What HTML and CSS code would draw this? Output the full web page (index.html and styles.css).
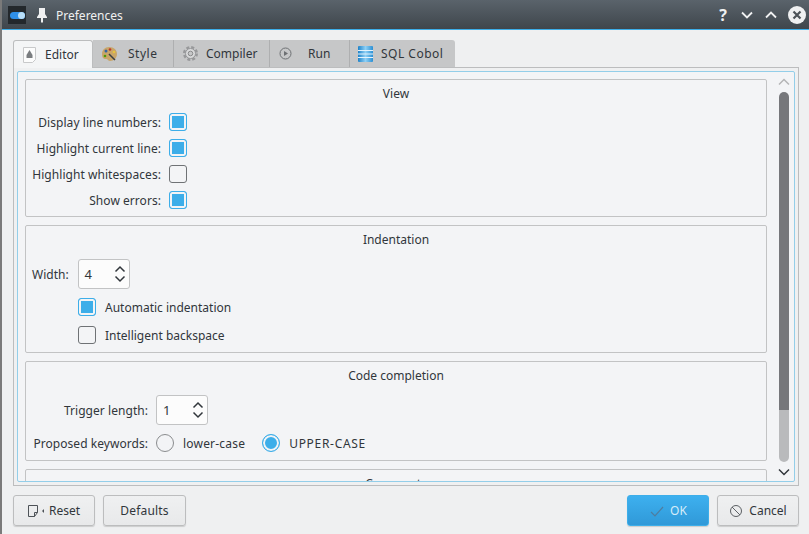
FILE: index.html
```html
<!DOCTYPE html>
<html lang="en">
<head>
    <meta charset="UTF-8">
    <title>Preferences</title>
    <link rel="stylesheet" href="styles.css">
</head>
<body>
<div class="window">
    <div class="titlebar">
        <div class="app-icon"><span class="app-pill"><span class="app-knob"></span></span></div>
        <svg class="pin" width="16" height="16" viewBox="0 0 16 16"><path d="M5 1h6v6l2 3v1H9v4l-1 1-1-1v-4H3v-1l2-3z" fill="#eff0f1"/></svg>
        <span class="title">Preferences</span>
        <div class="title-buttons">
            <span class="help">?</span>
            <svg width="14" height="14" viewBox="0 0 14 14"><path d="M2 4.500l5 5 5-5" fill="none" stroke="#eff0f1" stroke-width="1.800"/></svg>
            <svg width="14" height="14" viewBox="0 0 14 14"><path d="M2 9.500l5-5 5 5" fill="none" stroke="#eff0f1" stroke-width="1.800"/></svg>
            <svg width="18" height="18" viewBox="0 0 18 18"><circle cx="9" cy="9" r="9" fill="#eff0f1"/><path d="M5.500 5.500l7 7M12.500 5.500l-7 7" stroke="#4d5358" stroke-width="2.200"/></svg>
        </div>
    </div>

    <div class="content">
        <div class="tabs">
            <div class="tab tab-active">
                <svg width="16" height="18" viewBox="0 0 16 18"><path d="M1.500 1.500h12v12l-3 3h-9z" fill="#fcfcfc" stroke="#c8c9ca"/><path d="M7.500 4l3 5v3h-6V9z" fill="#7a7d80"/></svg>
                <span>Editor</span>
            </div>
            <div class="tab tab-style">
                <svg width="17" height="16" viewBox="0 0 17 16"><path d="M8 1c5 0 8 3 8 7s-3 7-7 7c-2 0-2-2-4-2-3 0-4-2-4-5 0-4 3-7 7-7z" fill="#c9a568"/><circle cx="5" cy="5" r="1.500" fill="#3465a4"/><circle cx="9" cy="3.500" r="1.300" fill="#c0392b"/><circle cx="13" cy="6" r="1.300" fill="#e8c33c"/><circle cx="4" cy="10" r="1.300" fill="#4e9a06"/><path d="M8 8l6 6" stroke="#3b3f42" stroke-width="1.500"/></svg>
                <span class="wide-text">Style</span>
            </div>
            <div class="tab tab-compiler">
                <svg width="17" height="17" viewBox="0 0 17 17"><circle cx="8.500" cy="8.500" r="6" fill="none" stroke="#97989a" stroke-width="3" stroke-dasharray="2.800 1.910"/><circle cx="8.500" cy="8.500" r="5" fill="#d9dadb" stroke="#97989a"/><circle cx="8.500" cy="8.500" r="2.300" fill="#c6c7c8" stroke="#8a8b8c"/></svg>
                <span>Compiler</span>
            </div>
            <div class="tab tab-run">
                <svg width="13" height="13" viewBox="0 0 13 13"><circle cx="6.500" cy="6.500" r="5.500" fill="none" stroke="#6d7073"/><path d="M5 4l4 2.500L5 9z" fill="#6d7073"/></svg>
                <span>Run</span>
            </div>
            <div class="tab tab-sql">
                <svg width="15" height="16" viewBox="0 0 15 16"><defs><linearGradient id="db" x1="0" x2="1" y1="0" y2="0"><stop offset="0" stop-color="#1d82c9"/><stop offset="0.500" stop-color="#8fd0f5"/><stop offset="1" stop-color="#2a8fd4"/></linearGradient></defs><rect width="15" height="16" rx="1" fill="url(#db)"/><path d="M0 4.500h15M0 8h15M0 11.500h15" stroke="#e4f3fc"/></svg>
                <span class="wide-text">SQL Cobol</span>
            </div>
        </div>

        <div class="tab-pane">
            <div class="page">
                <div class="scroll-area">
                    <section class="group group-view">
                        <h3>View</h3>
                        <div class="form-grid">
                            <label>Display line numbers:</label><span class="check on"></span>
                            <label>Highlight current line:</label><span class="check on"></span>
                            <label>Highlight whitespaces:</label><span class="check"></span>
                            <label>Show errors:</label><span class="check on"></span>
                        </div>
                    </section>

                    <section class="group group-indent">
                        <h3>Indentation</h3>
                        <div class="width-row">
                            <label>Width:</label>
                            <div class="spin"><span>4</span>
                                <svg width="12" height="18" viewBox="0 0 12 18"><path d="M1.500 6.500L6 2l4.500 4.500M1.500 11.500L6 16l4.500-4.500" fill="none" stroke="#31363b" stroke-width="1.500"/></svg>
                            </div>
                        </div>
                        <div class="check-row"><span class="check on"></span><label>Automatic indentation</label></div>
                        <div class="check-row"><span class="check"></span><label>Intelligent backspace</label></div>
                    </section>

                    <section class="group group-code">
                        <h3>Code completion</h3>
                        <div class="code-grid">
                            <label>Trigger length:</label>
                            <div class="spin"><span>1</span>
                                <svg width="12" height="18" viewBox="0 0 12 18"><path d="M1.500 6.500L6 2l4.500 4.500M1.500 11.500L6 16l4.500-4.500" fill="none" stroke="#31363b" stroke-width="1.500"/></svg>
                            </div>
                            <label>Proposed keywords:</label>
                            <div class="radios">
                                <span class="radio"></span><span class="radio-text">lower-case</span>
                                <span class="radio on"></span><span class="upper-text">UPPER-CASE</span>
                            </div>
                        </div>
                    </section>

                    <section class="group">
                        <h3>Comments</h3>
                    </section>
                </div>

                <div class="scrollbar">
                    <svg width="12" height="8" viewBox="0 0 12 8"><path d="M1 6.500l5-5 5 5" fill="none" stroke="#b4b5b6" stroke-width="1.500"/></svg>
                    <div class="scroll-track"><div class="scroll-thumb"></div></div>
                    <svg width="12" height="8" viewBox="0 0 12 8"><path d="M1 1.500l5 5 5-5" fill="none" stroke="#31363b" stroke-width="1.500"/></svg>
                </div>
            </div>
        </div>

        <div class="buttons">
            <button class="btn btn-icon">
                <svg width="16" height="14" viewBox="0 0 16 14"><path d="M0.500 1.500h9v7l-3 4h-6zM6.500 12.500v-4h3" fill="none" stroke="#4d5257"/><path d="M16 5v4l-2-2z" fill="#4d5257"/></svg>
                Reset
            </button>
            <button class="btn btn-wide">Defaults</button>
            <div class="spacer"></div>
            <button class="btn btn-ok btn-icon">
                <svg width="16" height="12" viewBox="0 0 16 12"><path d="M2 7l4 4 8-9" fill="none" stroke="#4f7d9f" stroke-width="1.200"/></svg>
                OK
            </button>
            <button class="btn">
                <svg width="14" height="14" viewBox="0 0 14 14"><circle cx="7" cy="7" r="5.500" fill="none" stroke="#5d6165"/><path d="M3 3l8 8" stroke="#5d6165"/></svg>
                Cancel
            </button>
        </div>
    </div>
</div>
</body>
</html>
```

FILE: styles.css
```css
/* Window */
html, body {
    margin: 0;
    height: 100%;
    overflow: hidden;
}

body {
    font-family: "Noto Sans", sans-serif;
    font-size: 12px;
    color: #31363b;
    background-color: #eff0f1;
}

.window {
    width: 809px;
    height: 534px;
    border-left: 2px solid #7a7a7a;
    box-sizing: border-box;
    display: flex;
    flex-direction: column;
}

/* Title bar */
.titlebar {
    flex: none;
    display: flex;
    align-items: center;
    padding: 1px 0 0 6px;
    height: 28px;
    color: #eff0f1;
    background: linear-gradient(#5a636b, #3f464c);
    border-bottom: 1px solid #3daee9;
}

.app-icon {
    width: 18px;
    height: 18px;
    background-color: #23282c;
    display: flex;
    align-items: center;
    justify-content: center;
}

.app-pill {
    width: 15px;
    height: 7px;
    border-radius: 4px;
    background-color: #2f8fe8;
    position: relative;
}

.app-knob {
    position: absolute;
    right: 0;
    top: 0;
    width: 7px;
    height: 7px;
    border-radius: 50%;
    background-color: #b8def8;
}

.pin {
    margin-left: 8px;
}

.title {
    margin-left: 6px;
}

.title-buttons {
    margin-left: auto;
    display: flex;
    align-items: center;
    gap: 10px;
    padding-right: 3px;
}

.help {
    font-size: 16px;
    font-weight: bold;
    margin-right: 3px;
}

/* Content */
.content {
    flex: 1;
    min-height: 0;
    display: flex;
    flex-direction: column;
    padding: 10px 10px 8px 11px;
}

/* Tabs */
.tabs {
    display: flex;
    height: 27px;
    flex: none;
    position: relative;
    z-index: 1;
}

.tab {
    display: flex;
    align-items: center;
    background-color: #c6c7c8;
    border-right: 1px solid #aeafb0;
    box-sizing: border-box;
}

.tab-active {
    width: 80px;
    padding-left: 8px;
    gap: 7px;
    margin-bottom: -1px;
    background-color: #f4f5f6;
    border: 1px solid #bcbdbe;
    border-bottom: none;
    border-radius: 3px 3px 0 0;
}

.tab-style {
    width: 81px;
    padding-left: 8px;
    gap: 10px;
}

.tab-compiler {
    width: 96px;
    padding-left: 8px;
    gap: 7px;
}

.tab-run {
    width: 80px;
    padding-left: 9px;
    gap: 16px;
}

.tab-sql {
    width: 105px;
    padding-left: 8px;
    gap: 8px;
    border-right: none;
    border-radius: 0 3px 0 0;
}

.wide-text {
    letter-spacing: 0.5px;
}

.tab-pane {
    height: 419px;
    flex: none;
    box-sizing: border-box;
    border: 1px solid #bcbdbe;
    padding: 3px;
    background-color: #eff0f1;
}

.page {
    height: 100%;
    box-sizing: border-box;
    border: 1px solid #93cee9;
    border-radius: 2px;
    background-color: #f3f4f6;
    display: flex;
    padding: 7px 3px 0 7px;
}

.scroll-area {
    width: 742px;
    overflow: hidden;
    flex: none;
}

/* Groups */
.group {
    box-sizing: border-box;
    border: 1px solid #c2c3c4;
    border-radius: 2px;
    margin-bottom: 8px;
    padding: 0 6px;
}

.group h3 {
    margin: 0;
    font-size: 12px;
    font-weight: normal;
    text-align: center;
    height: 28px;
    line-height: 28px;
}

.group-view {
    height: 138px;
}

.group-indent {
    height: 128px;
}

.group-code {
    height: 100px;
}

.form-grid label, .code-grid label {
    letter-spacing: 0.05px;
    white-space: nowrap;
}

.form-grid {
    display: grid;
    grid-template-columns: 129px 18px;
    grid-auto-rows: 26px;
    column-gap: 8px;
    align-items: center;
    justify-items: end;
    margin-top: 1px;
}

.check {
    width: 18px;
    height: 18px;
    box-sizing: border-box;
    display: block;
    flex: none;
    border: 1px solid #6f7275;
    border-radius: 3px;
    background-color: #f3f4f6;
}

.check.on {
    border-color: #3daee9;
    background-color: #3daee9;
    box-shadow: inset 0 0 0 2px #f3f4f6;
}

.width-row {
    display: flex;
    align-items: center;
    gap: 9px;
    margin: 5px 0 4px;
}

.spin {
    width: 52px;
    height: 30px;
    box-sizing: border-box;
    border: 1px solid #c2c3c4;
    border-radius: 3px;
    background-color: #fcfcfc;
    display: flex;
    align-items: center;
    justify-content: space-between;
    padding: 0 3px 0 6px;
    font-size: 13px;
}

.check-row {
    display: flex;
    align-items: center;
    gap: 9px;
    height: 28px;
    margin-left: 46px;
}

.code-grid {
    display: grid;
    grid-template-columns: 116px auto;
    column-gap: 8px;
    row-gap: 9px;
    align-items: center;
    justify-items: end;
    justify-content: start;
    margin-top: 5px;
}

.code-grid .spin {
    justify-self: start;
}

.radios {
    display: flex;
    align-items: center;
    gap: 9px;
    justify-self: start;
}

.radio {
    width: 18px;
    height: 18px;
    box-sizing: border-box;
    border: 1px solid #8a8c8e;
    border-radius: 50%;
    background-color: #f3f4f6;
}

.radio.on {
    border-color: #3daee9;
    background-color: #3daee9;
    box-shadow: inset 0 0 0 2px #f3f4f6;
}

.radio-text {
    letter-spacing: 0.2px;
    margin-right: 8px;
}

.upper-text {
    letter-spacing: 0.7px;
}

/* Scrollbar */
.scrollbar {
    width: 12px;
    margin: -1px 0 0 11px;
    display: flex;
    flex-direction: column;
    align-items: center;
    gap: 6px;
    height: 398px;
}

.scroll-track {
    flex: 1;
    width: 10px;
    display: flex;
}

.scroll-thumb {
    width: 10px;
    height: 100%;
    border-radius: 5px;
    background: linear-gradient(#76777b 0%, #76777b 86%, #b9babc 86%, #b9babc 100%);
}

/* Bottom buttons */
.buttons {
    display: flex;
    gap: 8px;
    margin-top: 9px;
    height: 31px;
    flex: none;
}

.spacer {
    flex: 1;
}

.btn {
    width: 82px;
    height: 31px;
    box-sizing: border-box;
    font-family: inherit;
    font-size: 12px;
    color: #31363b;
    border: 1px solid #bcbdbe;
    border-radius: 3px;
    background: linear-gradient(#eff0f1, #e8e9ea);
    box-shadow: 0 1px 1px rgba(0, 0, 0, 0.15);
    display: flex;
    align-items: center;
    justify-content: center;
    gap: 6px;
    padding: 0;
}

.btn-icon {
    gap: 5px;
}

.btn-wide {
    width: 83px;
    letter-spacing: 0.2px;
}

.btn-ok {
    color: #d6ecf9;
    border-color: #3daee9;
    background: linear-gradient(#3db0ef, #3099d8);
}
```
